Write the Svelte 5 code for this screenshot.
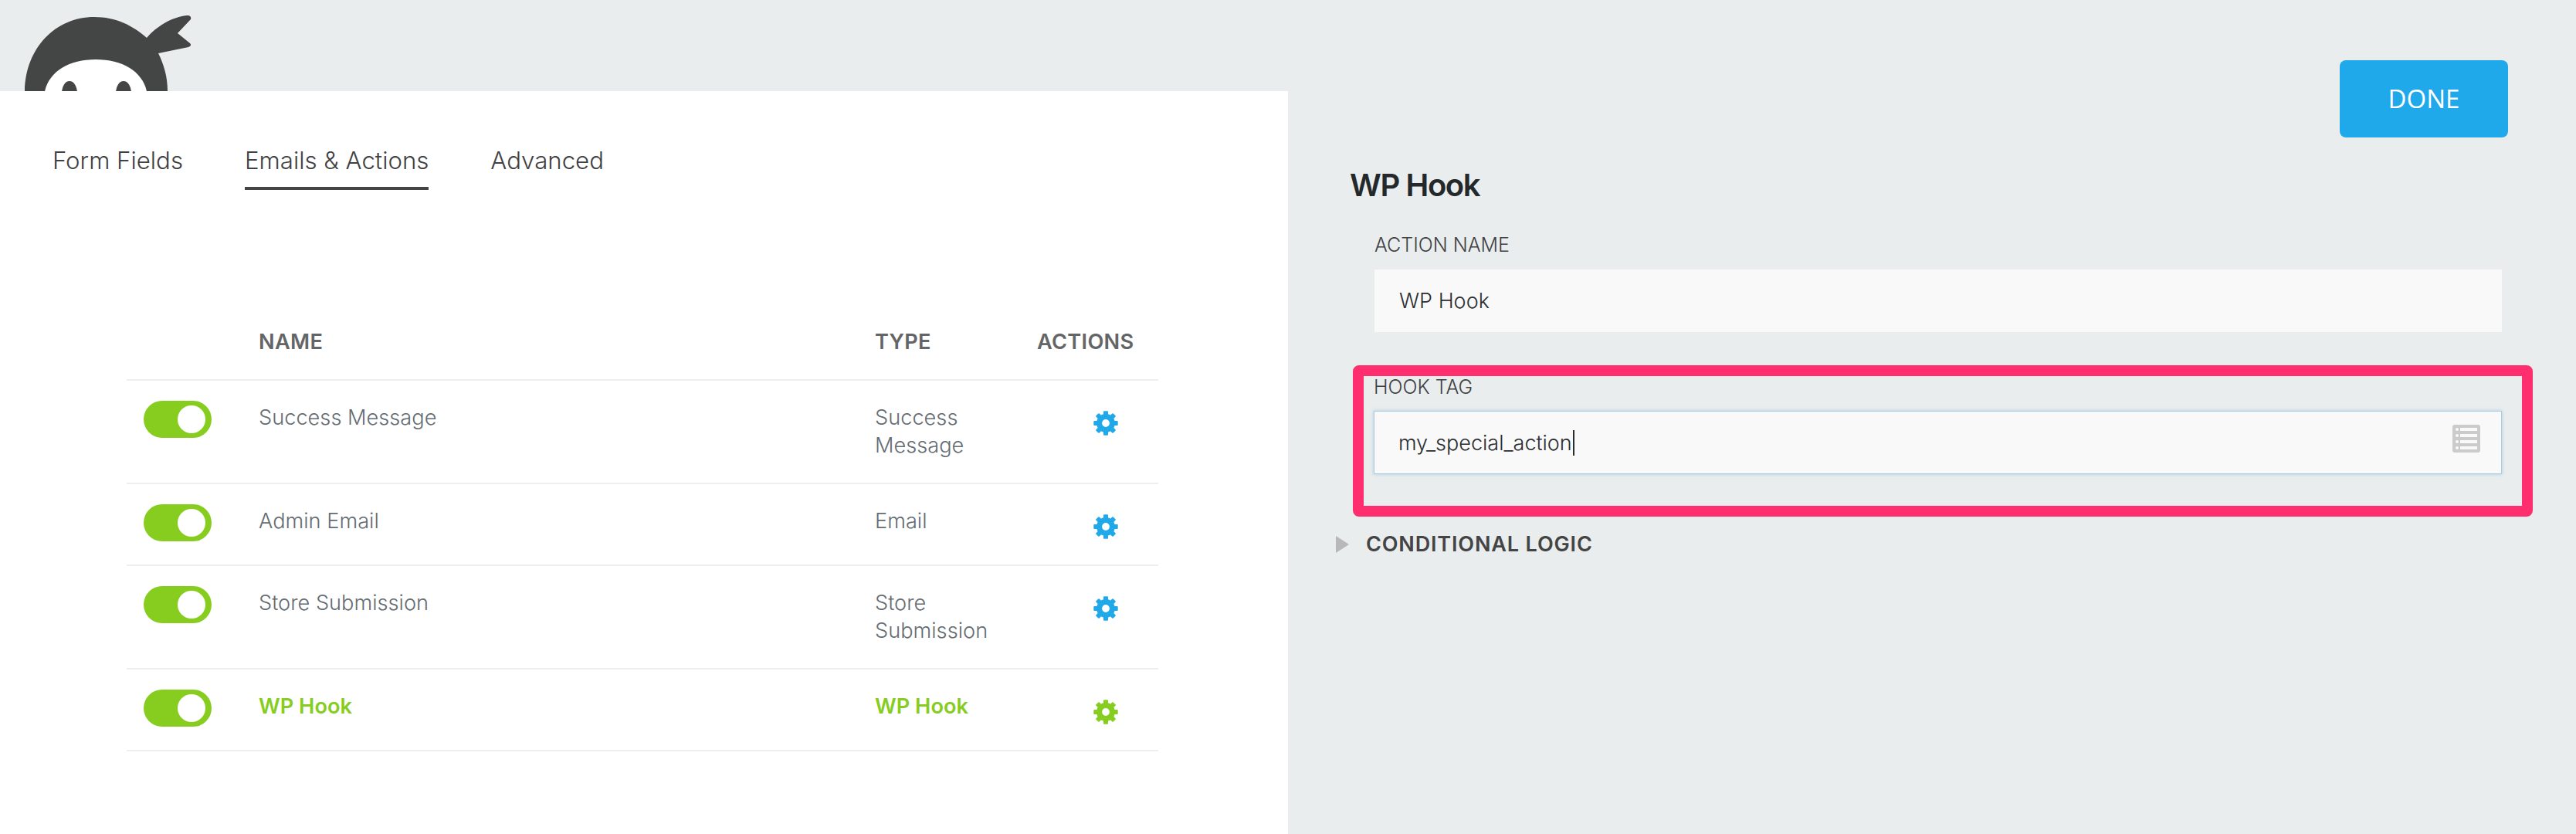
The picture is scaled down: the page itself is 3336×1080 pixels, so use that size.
<script>
  const rows = [
    { name: 'Success Message', type: ['Success', 'Message'] },
    { name: 'Admin Email', type: ['Email'] },
    { name: 'Store Submission', type: ['Store', 'Submission'] },
    { name: 'WP Hook', type: ['WP Hook'], active: true },
  ];
  const teeth = [0, 45, 90, 135, 180, 225, 270, 315];
</script>

<div class="page">
  <div class="left">
    <div class="logo-strip">
      <svg class="logo" width="260" height="118" viewBox="0 0 260 118" aria-hidden="true">
        <path fill="#444645" d="M32 118C33 62 72 22 122 22c28 0 50 11 68 27 12-14 32-27 52-29 4-.4 6 2 5 5l-17 18 16 13c2 2 1 4-2 5l-39 8c7 14 12 30 12 49z"/>
        <path fill="#fff" d="M58 118c6-26 32-41 66-41s60 15 66 41z"/>
        <ellipse cx="90" cy="120" rx="10" ry="15" fill="#444645"/>
        <ellipse cx="160" cy="120" rx="10" ry="15" fill="#444645"/>
      </svg>
    </div>
    <div class="panel">
      <nav class="tabs">
        <span class="tab">Form Fields</span>
        <span class="tab current">Emails &amp; Actions</span>
        <span class="tab">Advanced</span>
      </nav>

      <div class="table">
        <div class="row head">
          <span></span>
          <span>NAME</span>
          <span>TYPE</span>
          <span>ACTIONS</span>
        </div>
        {#each rows as row}
          <div class="row" class:active={row.active}>
            <span class="toggle"><span class="knob"></span></span>
            <span class="cell">{row.name}</span>
            <span class="cell">
              {#each row.type as line}
                <span class="line">{line}</span>
              {/each}
            </span>
            <span class="gear">
              <svg width="32" height="32" viewBox="-16 -16 32 32" fill="currentColor" aria-hidden="true">
                {#each teeth as deg}
                  <rect x="-3" y="-15.7" width="6" height="6" rx="1" transform="rotate({deg})"/>
                {/each}
                <circle r="8.4" fill="none" stroke="currentColor" stroke-width="7"/>
              </svg>
            </span>
          </div>
        {/each}
      </div>
    </div>
  </div>

  <div class="right">
    <div class="done-bar">
      <button class="done">DONE</button>
    </div>
    <h2>WP Hook</h2>

    <div class="field">
      <span class="label">ACTION NAME</span>
      <div class="input">WP Hook</div>
    </div>

    <div class="hook-box">
      <span class="label">HOOK TAG</span>
      <div class="input focus">
        <span class="value">my_special_action</span><span class="caret"></span>
        <svg class="list-icon" width="36" height="36" viewBox="0 0 36 36" aria-hidden="true">
          <rect width="36" height="36" rx="3" fill="#cbcbcb"/>
          {#each [4, 12, 20, 28] as y}
            <circle cx="6" cy={y + 2} r="2" fill="#f9f9f9"/>
            <rect x="10" y={y} width="22" height="4" fill="#f9f9f9"/>
          {/each}
        </svg>
      </div>
    </div>

    <div class="logic">
      <span class="arrow"></span>
      <span>CONDITIONAL LOGIC</span>
    </div>
  </div>
</div>

<style>
  :global(body) {
    margin: 0;
    background: #e9edee;
    font-family: Inter, "Liberation Sans", sans-serif;
  }
  .page {
    display: flex;
    height: 1080px;
    overflow: hidden;
  }
  .left {
    width: 1668px;
    flex: none;
    display: flex;
    flex-direction: column;
  }
  .logo-strip {
    height: 118px;
    overflow: hidden;
  }
  .logo {
    display: block;
  }
  .panel {
    flex: 1;
    background: #fff;
  }
  .tabs {
    display: flex;
    gap: 80px;
    padding: 70px 0 0 68px;
  }
  .tab {
    height: 54px;
    font-size: 31.2px;
    font-weight: 300;
    line-height: 40px;
    color: #3f4143;
  }
  .tab.current {
    border-bottom: 4px solid #444;
  }
  .table {
    margin: 179px 0 0 164px;
    width: 1336px;
  }
  .row {
    display: grid;
    grid-template-columns: 171px 798px 210px 1fr;
    padding: 26px 0 30px;
    border-bottom: 2px solid #eeeeee;
    font-size: 27.2px;
    font-weight: 300;
    line-height: 36px;
    color: #656c72;
  }
  .row.head {
    padding: 0 0 30px;
    font-weight: 600;
    color: #646566;
    letter-spacing: 0.3px;
  }
  .row.active {
    color: #86cd1f;
    font-weight: 600;
  }
  .toggle {
    display: flex;
    justify-content: flex-end;
    align-items: center;
    box-sizing: border-box;
    width: 88px;
    height: 48px;
    margin-left: 22px;
    padding-right: 8px;
    border-radius: 24px;
    background: #86cd1f;
  }
  .knob {
    width: 36px;
    height: 36px;
    border-radius: 50%;
    background: #fff;
  }
  .cell {
    padding-top: 4px;
  }
  .line {
    display: block;
  }
  .gear {
    padding: 13px 0 0 73px;
    color: #1fa9eb;
  }
  .active .gear {
    color: #86cd1f;
  }
  .gear svg {
    display: block;
  }
  .right {
    flex: 1;
    padding-right: 56px;
  }
  .done-bar {
    display: flex;
    justify-content: flex-end;
    padding: 78px 32px 0 0;
  }
  .done {
    width: 218px;
    height: 100px;
    padding-bottom: 2px;
    border: 0;
    border-radius: 8px;
    background: #1fa9eb;
    color: #fff;
    font-family: "Open Sans", sans-serif;
    font-size: 33px;
    font-weight: 400;
  }
  h2 {
    margin: 38px 0 0 80px;
    font-size: 40px;
    font-weight: 600;
    line-height: 48px;
    color: #24282b;
    letter-spacing: -1.4px;
  }
  .field {
    margin: 39px 0 0 112px;
    width: 1460px;
  }
  .label {
    display: block;
    font-size: 25px;
    font-weight: 300;
    line-height: 28px;
    color: #3f4143;
  }
  .input {
    position: relative;
    box-sizing: border-box;
    height: 81px;
    margin-top: 18px;
    padding-left: 32px;
    display: flex;
    align-items: center;
    background: #f9f9f9;
    font-size: 27px;
    font-weight: 300;
    color: #2b2e31;
  }
  .input.focus {
    height: 82px;
    margin-top: 17px;
    border: 1px solid #a9cde0;
    box-shadow: 0 0 4px rgba(110, 170, 210, 0.5);
    padding-left: 31px;
  }
  .caret {
    width: 2px;
    height: 33px;
    margin-left: 1px;
    background: #2b2e31;
  }
  .list-icon {
    position: absolute;
    right: 27px;
    top: 17px;
  }
  .hook-box {
    box-sizing: border-box;
    width: 1528px;
    height: 196px;
    margin: 43px 0 0 84px;
    padding: 0 26px 0 13px;
    border: 14px solid #ff2e6e;
    border-radius: 8px;
  }
  .logic {
    display: flex;
    align-items: center;
    margin: 18px 0 0 62px;
    gap: 22px;
    font-size: 27px;
    font-weight: 600;
    line-height: 36px;
    color: #444;
    letter-spacing: 0.85px;
  }
  .arrow {
    width: 0;
    height: 0;
    border-left: 17px solid #b8b8b8;
    border-top: 11px solid transparent;
    border-bottom: 11px solid transparent;
  }
</style>
